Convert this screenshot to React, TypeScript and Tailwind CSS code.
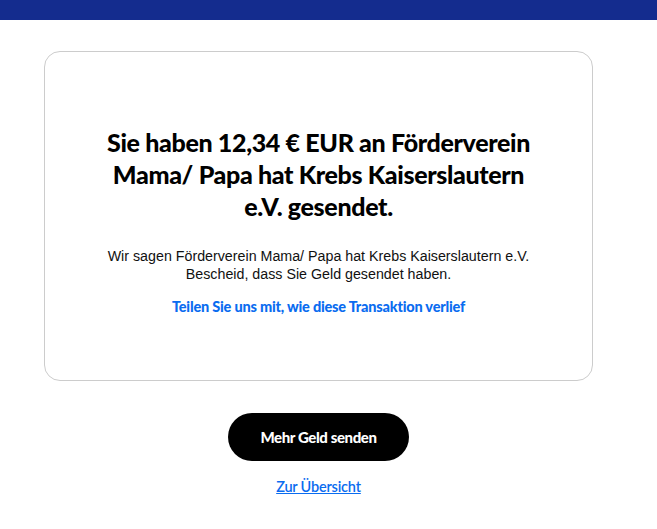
import React from 'react';

const App: React.FC = () => {
  return (
    <div className="min-h-screen bg-white" style={{ fontFamily: '"Liberation Sans", Arial, sans-serif' }}>
      {/* Top bar */}
      <div className="h-[20px] w-full bg-[#142c8e]" />

      <div className="w-[637px] flex flex-col items-center px-[44px] pt-[31px]">
        {/* Card */}
        <div className="w-full h-[330px] rounded-[16px] border border-[#cccccc] flex flex-col items-center pt-[74px]">
          <h1 className="w-[445px] text-center text-[25px] leading-[32px] font-black tracking-[-0.35px] text-black font-['Lato',sans-serif]">
            Sie haben 12,34 € EUR an Förderverein Mama/ Papa hat Krebs Kaiserslautern e.V. gesendet.
          </h1>
          <p className="mt-[25px] w-[440px] text-center text-[14.25px] leading-[18px] text-[#111111]">
            Wir sagen Förderverein Mama/ Papa hat Krebs Kaiserslautern e.V. Bescheid, dass Sie Geld gesendet haben.
          </p>
          <a href="#" className="mt-[14px] text-[14.5px] leading-[20px] font-black tracking-[-0.2px] text-[#0a6cf0] font-['Lato',sans-serif]">
            Teilen Sie uns mit, wie diese Transaktion verlief
          </a>
        </div>

        <button className="mt-[32px] w-[181px] h-[48px] rounded-full bg-black text-white text-[15px] font-black tracking-[-0.4px] font-['Lato',sans-serif]">
          Mehr Geld senden
        </button>

        <a href="#" className="mt-[16px] text-[14.5px] leading-[20px] text-[#0a6cf0] underline tracking-[-0.2px] font-['Lato',sans-serif] font-semibold">
          Zur Übersicht
        </a>
      </div>
    </div>
  );
};

export default App;
